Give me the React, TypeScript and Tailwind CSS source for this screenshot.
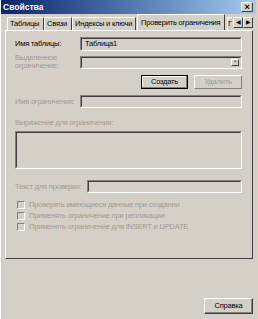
const font = { fontFamily: '"Liberation Sans", Arial, sans-serif' };

function Sunken({ className = '', children }: { className?: string; children?: React.ReactNode }) {
  return (
    <div className={`border border-t-[#808080] border-l-[#808080] border-r-white border-b-white ${className}`}>
      <div className="h-full w-full border border-t-[#404040] border-l-[#404040] border-r-[#d4d0c8] border-b-[#d4d0c8]">
        {children}
      </div>
    </div>
  );
}

function Tab({ label, width }: { label: string; width: number }) {
  return (
    <div
      className="flex h-[13px] shrink-0 items-center overflow-hidden whitespace-nowrap border-t border-l border-r border-t-white border-l-white border-r-[#404040] pl-[2px] text-black"
      style={{ width }}
    >
      {label}
    </div>
  );
}

function Check({ label }: { label: string }) {
  return (
    <div className="flex h-[11px] items-center gap-[4px]">
      <div className="h-[8px] w-[8px] border border-t-[#808080] border-l-[#808080] border-r-white border-b-white bg-[#d4d0c8]" />
      <span className="whitespace-nowrap text-[#a09c94]">{label}</span>
    </div>
  );
}

export default function App() {
  return (
    <div
      className="flex h-[319px] w-[258px] flex-col overflow-hidden border-l border-l-white bg-[#d4d0c8] pr-[2px] text-[7.5px] tracking-[-0.2px]"
      style={font}
    >
      <div className="flex h-[14px] shrink-0 items-center justify-between bg-gradient-to-r from-[#0a246a] to-[#a6caf0] pl-[2px] pr-[3px]">
        <span className="text-[8.5px] font-bold tracking-normal text-white">Свойства</span>
        <div className="flex h-[10px] w-[12px] items-center justify-center border border-t-white border-l-white border-r-[#404040] border-b-[#404040] bg-[#d4d0c8] text-[9px] font-bold leading-none text-black">
          ×
        </div>
      </div>

      <div className="mt-[2px] flex h-[14px] shrink-0 items-end pl-[6px]">
        <Tab label="Таблицы" width={37} />
        <Tab label="Связи" width={28} />
        <Tab label="Индексы и ключи" width={64} />
        <div className="ml-[1px] flex h-[16px] w-[88px] shrink-0 items-center whitespace-nowrap border-t border-l border-r border-t-white border-l-white border-r-[#404040] pl-[3px] text-black">
          Проверить ограничения
        </div>
        <div className="ml-[2px] flex h-[13px] w-[5px] items-center overflow-hidden border-l border-t border-white">
          Г
        </div>
        <div className="mb-[2px] ml-[1px] flex h-[11px] w-[10px] items-center justify-center border border-t-white border-l-white border-r-[#404040] border-b-[#404040] text-[6px]">
          ◀
        </div>
        <div className="mb-[2px] flex h-[11px] w-[10px] items-center justify-center border border-t-white border-l-white border-r-[#404040] border-b-[#404040] text-[6px]">
          ▶
        </div>
      </div>

      <div className="ml-[4px] flex h-[229px] w-[248px] shrink-0 flex-col border border-t-white border-l-white border-r-[#404040] border-b-[#404040] pl-[9px] pr-[10px] pt-[5px]">
        <div className="flex h-[15px] items-center">
          <span className="w-[65px] shrink-0 whitespace-nowrap text-black">Имя таблицы:</span>
          <Sunken className="h-[14px] flex-1">
            <div className="flex h-full items-center pl-[3px] text-black">Таблица1</div>
          </Sunken>
        </div>

        <div className="mt-[4px] flex h-[14px] items-center">
          <span className="w-[65px] shrink-0 whitespace-nowrap leading-[8px] text-[#a09c94]">
            Выделенное
            <br />
            ограничение:
          </span>
          <Sunken className="h-[13px] flex-1">
            <div className="flex h-full justify-end">
              <div className="m-[1px] flex w-[8px] items-center justify-center border border-t-white border-l-white border-r-[#404040] border-b-[#404040] text-[5px] text-[#808080]">
                ▼
              </div>
            </div>
          </Sunken>
        </div>

        <div className="mt-[6px] flex justify-end gap-[6px]">
          <div className="flex h-[14px] w-[47px] items-center justify-center border border-black text-black shadow-[inset_-1px_-1px_#808080,inset_1px_1px_white]">
            Создать
          </div>
          <div className="flex h-[14px] w-[48px] items-center justify-center border border-t-white border-l-white border-r-[#808080] border-b-[#808080] text-[#a09c94]">
            Удалить
          </div>
        </div>

        <div className="mt-[6px] flex h-[13px] items-center">
          <span className="w-[65px] shrink-0 whitespace-nowrap text-[#a09c94]">Имя ограничения:</span>
          <Sunken className="h-[13px] flex-1" />
        </div>

        <span className="mt-[10px] whitespace-nowrap leading-[10px] text-[#a09c94]">Выражение для ограничения:</span>
        <Sunken className="mt-[3px] h-[38px] w-full" />

        <div className="mt-[11px] flex h-[13px] items-center">
          <span className="w-[72px] shrink-0 whitespace-nowrap text-[#a09c94]">Текст для проверки:</span>
          <Sunken className="h-[13px] flex-1" />
        </div>

        <div className="mt-[6px] flex flex-col pl-[2px]">
          <Check label="Проверять имеющиеся данные при создании" />
          <Check label="Применять ограничение при репликации" />
          <Check label="Применять ограничение для INSERT и UPDATE" />
        </div>
      </div>

      <div className="flex flex-1 items-end justify-end pb-[5px] pr-[3px]">
        <div className="flex h-[16px] w-[49px] items-center justify-center border border-t-white border-l-white border-r-[#404040] border-b-[#404040] text-black shadow-[inset_-1px_-1px_#808080]">
          Справка
        </div>
      </div>
    </div>
  );
}
